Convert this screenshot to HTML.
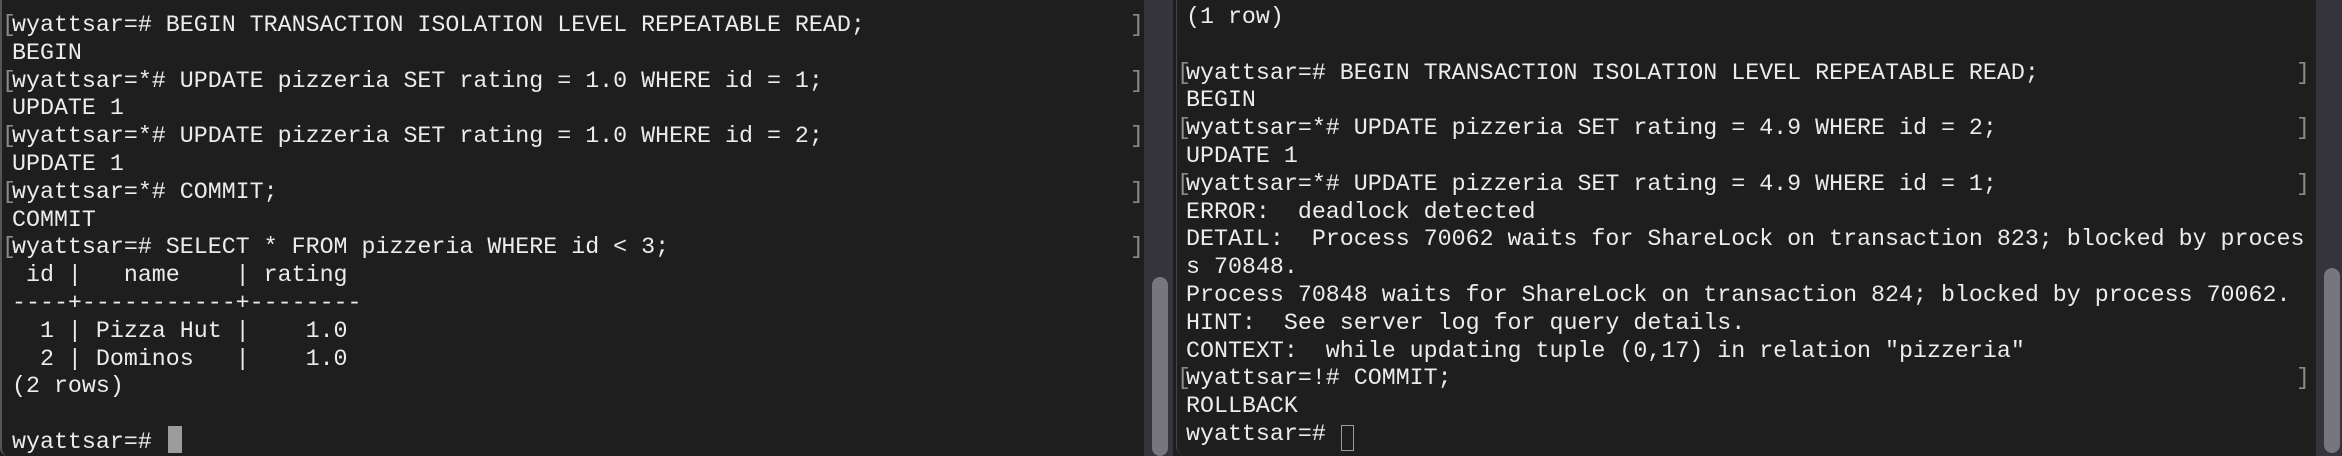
<!DOCTYPE html>
<html><head><style>
html,body{margin:0;padding:0;background:#1e1e1e;width:2342px;height:456px;overflow:hidden;position:relative}
.pane{position:absolute;top:0;bottom:0;background:#1e1e1e}
pre{margin:0;position:absolute;font-family:"Liberation Mono",monospace;font-size:23.3px;line-height:27.8px;color:#ececec;white-space:pre}
.b{color:#8a8a8a;position:absolute;font-family:"Liberation Mono",monospace;font-size:23.3px;line-height:27.8px}
</style></head><body>
<div class="pane" style="left:0;width:1144px;border-left:2px solid #555;border-bottom-left-radius:8px"></div>
<div style="position:absolute;left:1144px;top:0;width:29px;height:456px;background:#35343a"></div>
<div style="position:absolute;left:1152px;top:277px;width:16px;height:179px;background:#77767c;border-radius:8px"></div>
<div class="pane" style="left:1176px;width:1140px;border-left:1px solid #444;border-radius:0 0 0 10px"></div>
<div style="position:absolute;left:2316px;top:0;width:26px;height:456px;background:#35343a"></div>
<div style="position:absolute;left:2324px;top:268px;width:16px;height:185px;background:#77767c;border-radius:8px"></div>

<pre style="left:12px;top:12px">wyattsar=# BEGIN TRANSACTION ISOLATION LEVEL REPEATABLE READ;
BEGIN
wyattsar=*# UPDATE pizzeria SET rating = 1.0 WHERE id = 1;
UPDATE 1
wyattsar=*# UPDATE pizzeria SET rating = 1.0 WHERE id = 2;
UPDATE 1
wyattsar=*# COMMIT;
COMMIT
wyattsar=# SELECT * FROM pizzeria WHERE id &lt; 3;
 id |   name    | rating
----+-----------+--------
  1 | Pizza Hut |    1.0
  2 | Dominos   |    1.0
(2 rows)

wyattsar=# </pre>
<div style="position:absolute;left:168px;top:426px;width:14px;height:27px;background:#9c9c9c"></div>
<div class="b" style="left:2px;top:12px">[<br><br>[<br><br>[<br><br>[<br><br>[</div>
<div class="b" style="left:1130px;top:12px">]<br><br>]<br><br>]<br><br>]<br><br>]</div>

<pre style="left:1186px;top:4px">(1 row)

wyattsar=# BEGIN TRANSACTION ISOLATION LEVEL REPEATABLE READ;
BEGIN
wyattsar=*# UPDATE pizzeria SET rating = 4.9 WHERE id = 2;
UPDATE 1
wyattsar=*# UPDATE pizzeria SET rating = 4.9 WHERE id = 1;
ERROR:  deadlock detected
DETAIL:  Process 70062 waits for ShareLock on transaction 823; blocked by proces
s 70848.
Process 70848 waits for ShareLock on transaction 824; blocked by process 70062.
HINT:  See server log for query details.
CONTEXT:  while updating tuple (0,17) in relation "pizzeria"
wyattsar=!# COMMIT;
ROLLBACK
wyattsar=# </pre>
<div style="position:absolute;left:1341px;top:425px;width:11px;height:24px;border:1.5px solid #9c9c9c"></div>
<div class="b" style="left:1177px;top:4px"><br><br>[<br><br>[<br><br>[<br><br><br><br><br><br><br>[</div>
<div class="b" style="left:2296px;top:4px"><br><br>]<br><br>]<br><br>]<br><br><br><br><br><br><br>]</div>
</body></html>
